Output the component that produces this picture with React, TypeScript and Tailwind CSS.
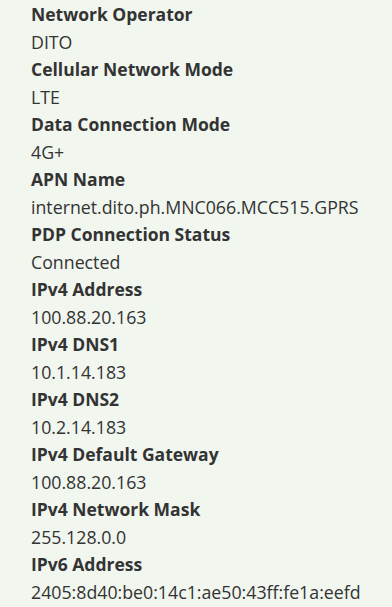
const rows: [string, string][] = [
  ["Network Operator", "DITO"],
  ["Cellular Network Mode", "LTE"],
  ["Data Connection Mode", "4G+"],
  ["APN Name", "internet.dito.ph.MNC066.MCC515.GPRS"],
  ["PDP Connection Status", "Connected"],
  ["IPv4 Address", "100.88.20.163"],
  ["IPv4 DNS1", "10.1.14.183"],
  ["IPv4 DNS2", "10.2.14.183"],
  ["IPv4 Default Gateway", "100.88.20.163"],
  ["IPv4 Network Mask", "255.128.0.0"],
  ["IPv6 Address", "2405:8d40:be0:14c1:ae50:43ff:fe1a:eefd"],
];

export default function App() {
  return (
    <div className="flex h-[607px] w-[392px] flex-col overflow-hidden bg-[#f1f6ef] pt-[1px] pl-[31px] font-['Open_Sans','Noto_Sans',sans-serif] text-[#333333]">
      {rows.map(([label, value]) => (
        <div key={label} className="flex flex-col">
          <div className="text-[17.5px] leading-[27.5px] font-bold whitespace-nowrap">{label}</div>
          <div className="text-[17.75px] leading-[27.5px] whitespace-nowrap">{value}</div>
        </div>
      ))}
    </div>
  );
}
